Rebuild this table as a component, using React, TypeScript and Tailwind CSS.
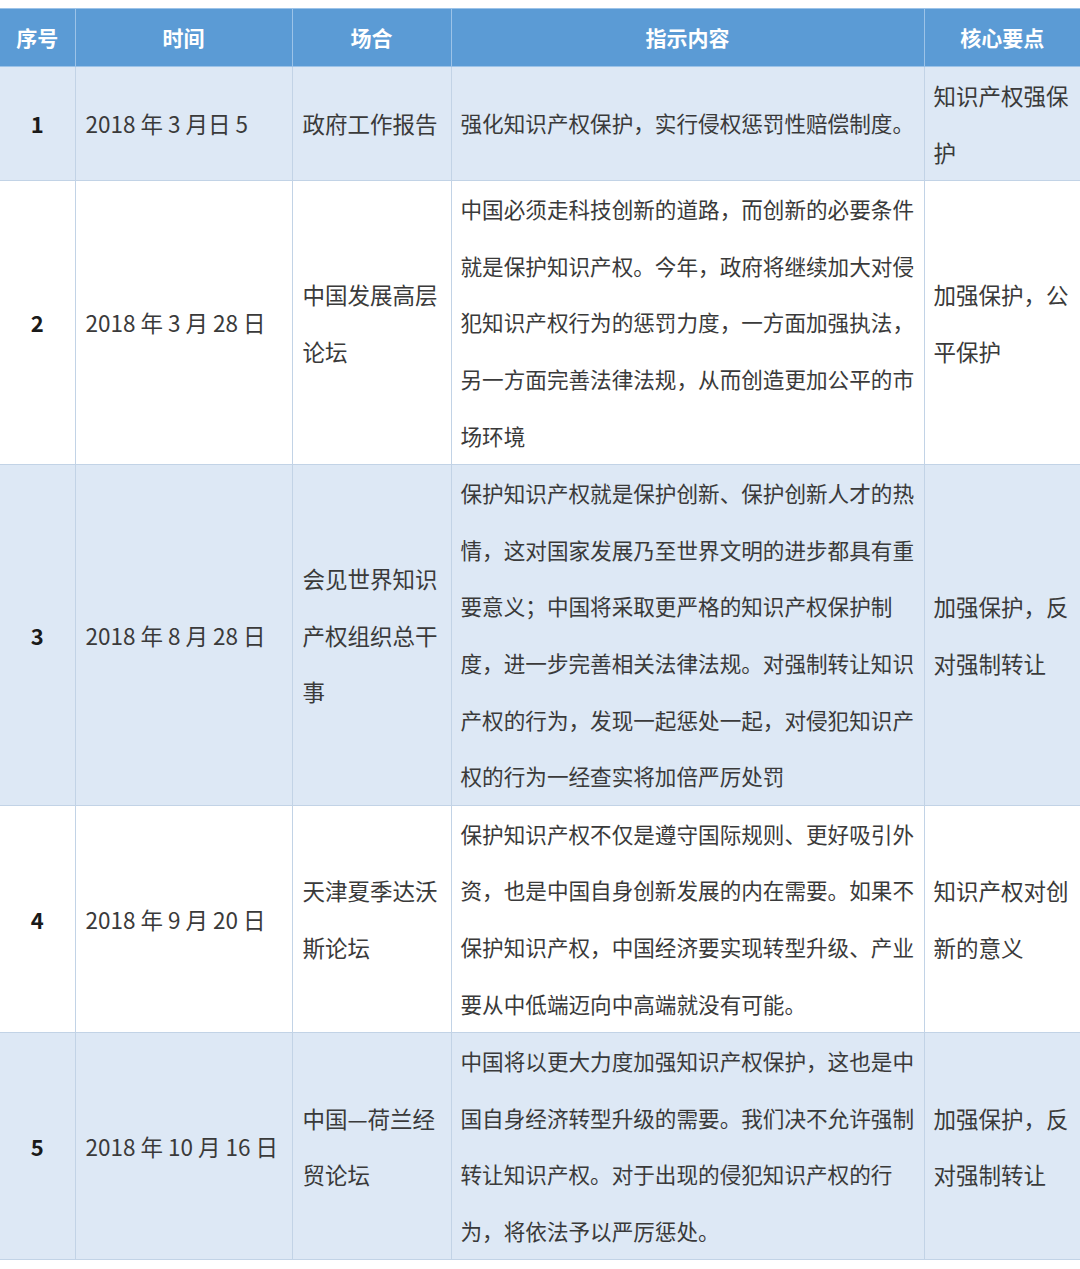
import React from 'react'

type Row = {
  no: string
  date: string
  place: string[]
  content: string[]
  point: string[]
  shaded: boolean
}

const rows: Row[] = [
  {
    no: '1',
    date: '2018 年 3 月日 5',
    place: ['政府工作报告'],
    content: ['强化知识产权保护，实行侵权惩罚性赔偿制度。'],
    point: ['知识产权强保', '护'],
    shaded: true,
  },
  {
    no: '2',
    date: '2018 年 3 月 28 日',
    place: ['中国发展高层', '论坛'],
    content: [
      '中国必须走科技创新的道路，而创新的必要条件',
      '就是保护知识产权。今年，政府将继续加大对侵',
      '犯知识产权行为的惩罚力度，一方面加强执法，',
      '另一方面完善法律法规，从而创造更加公平的市',
      '场环境',
    ],
    point: ['加强保护，公', '平保护'],
    shaded: false,
  },
  {
    no: '3',
    date: '2018 年 8 月 28 日',
    place: ['会见世界知识', '产权组织总干', '事'],
    content: [
      '保护知识产权就是保护创新、保护创新人才的热',
      '情，这对国家发展乃至世界文明的进步都具有重',
      '要意义；中国将采取更严格的知识产权保护制',
      '度，进一步完善相关法律法规。对强制转让知识',
      '产权的行为，发现一起惩处一起，对侵犯知识产',
      '权的行为一经查实将加倍严厉处罚',
    ],
    point: ['加强保护，反', '对强制转让'],
    shaded: true,
  },
  {
    no: '4',
    date: '2018 年 9 月 20 日',
    place: ['天津夏季达沃', '斯论坛'],
    content: [
      '保护知识产权不仅是遵守国际规则、更好吸引外',
      '资，也是中国自身创新发展的内在需要。如果不',
      '保护知识产权，中国经济要实现转型升级、产业',
      '要从中低端迈向中高端就没有可能。',
    ],
    point: ['知识产权对创', '新的意义'],
    shaded: false,
  },
  {
    no: '5',
    date: '2018 年 10 月 16 日',
    place: ['中国—荷兰经', '贸论坛'],
    content: [
      '中国将以更大力度加强知识产权保护，这也是中',
      '国自身经济转型升级的需要。我们决不允许强制',
      '转让知识产权。对于出现的侵犯知识产权的行',
      '为，将依法予以严厉惩处。',
    ],
    point: ['加强保护，反', '对强制转让'],
    shaded: true,
  },
]

function Lines({ lines }: { lines: string[] }) {
  return (
    <>
      {lines.map((l, i) => (
        <div key={i} className="whitespace-nowrap">{l}</div>
      ))}
    </>
  )
}

export default function App() {
  const font = { fontFamily: '"Noto Sans CJK SC", "Noto Sans", sans-serif' }
  return (
    <div className="w-[1080px] bg-white pt-[8px] pb-[10px]" style={font}>
      <table className="w-full table-fixed border-collapse">
        <colgroup>
          <col className="w-[75px]" />
          <col className="w-[217px]" />
          <col className="w-[159px]" />
          <col className="w-[473px]" />
          <col className="w-[156px]" />
        </colgroup>
        <thead>
          <tr className="bg-[#5b9bd5] text-white text-[21px] font-bold h-[58px]">
            <th className="border border-[#9cc3e8] border-l-0">序号</th>
            <th className="border border-[#9cc3e8]">时间</th>
            <th className="border border-[#9cc3e8]">场合</th>
            <th className="border border-[#9cc3e8]">指示内容</th>
            <th className="border border-[#9cc3e8] border-r-0">核心要点</th>
          </tr>
        </thead>
        <tbody className="text-[#3a3a3a] leading-[56.6px]">
          {rows.map((r) => (
            <tr key={r.no} className={r.shaded ? 'bg-[#dde8f5]' : 'bg-white'}>
              <td className="border border-[#c2d3e6] border-l-0 text-center align-middle text-[22px] font-bold text-[#1a1a1a]">
                {r.no}
              </td>
              <td className="border border-[#c2d3e6] pl-[10px] align-middle text-[22.5px] whitespace-nowrap">
                {r.date}
              </td>
              <td className="border border-[#c2d3e6] pl-[10px] align-middle text-[22.5px]">
                <Lines lines={r.place} />
              </td>
              <td className="border border-[#c2d3e6] pl-[9px] align-middle text-[21.6px]">
                <Lines lines={r.content} />
              </td>
              <td className="border border-[#c2d3e6] border-r-0 pl-[9px] align-middle text-[22.5px]">
                <Lines lines={r.point} />
              </td>
            </tr>
          ))}
        </tbody>
      </table>
    </div>
  )
}
